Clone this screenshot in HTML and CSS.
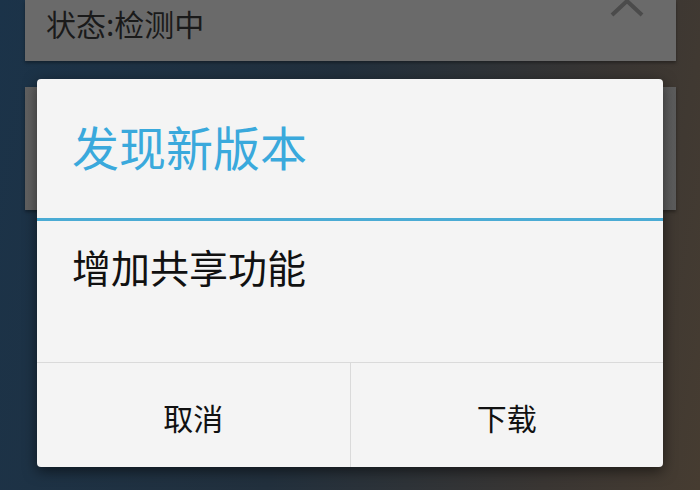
FILE: index.html
```html
<!DOCTYPE html>
<html lang="zh-CN">

<head>
    <meta charset="UTF-8">
    <meta name="viewport" content="width=device-width, initial-scale=1.0">
    <title>发现新版本</title>
    <link rel="stylesheet" href="styles.css">
</head>

<body>
    <div class="screen">
        <div class="card status-card">
            <span class="status">状态:检测中</span>
            <svg class="chevron" width="40" height="20" viewBox="0 0 40 20">
                <polyline points="5,15 20,1 35,15" fill="none" stroke="#4b4b4b" stroke-width="4" />
            </svg>
        </div>
        <div class="card info-card"></div>
    </div>

    <div class="dialog">
        <div class="dialog-title">发现新版本</div>
        <div class="dialog-body">增加共享功能</div>
        <div class="dialog-buttons">
            <button class="btn">取消</button>
            <button class="btn">下载</button>
        </div>
    </div>
</body>

</html>
```

FILE: styles.css
```css
html,
body {
    margin: 0;
    padding: 0;
    width: 700px;
    height: 490px;
    overflow: hidden;
}

body {
    font-family: "Noto Sans CJK SC", "Noto Sans", sans-serif;
    background: linear-gradient(100deg, #1b3349 0%, #22303d 45%, #3a3633 80%, #463c31 100%);
    position: relative;
}

.screen {
    padding: 0 24px 0 25px;
}

.card {
    background-color: #6a6a6a;
    box-shadow: 0 2px 3px rgba(0, 0, 0, 0.35);
}

.status-card {
    height: 61px;
    position: relative;
    display: flex;
    align-items: flex-start;
}

.status {
    font-size: 30px;
    line-height: 1;
    color: #1a1a1a;
    margin: 8px 0 0 21px;
}

.chevron {
    position: absolute;
    top: 0;
    left: 582px;
}

.info-card {
    margin-top: 26px;
    height: 123px;
    background: linear-gradient(90deg, #606060, #6c6c6c 10%, #6c6c6c 90%, #5c5c5c);
}

.dialog {
    position: absolute;
    left: 37px;
    top: 79px;
    width: 626px;
    height: 388px;
    background-color: #f4f4f4;
    border-radius: 4px;
    box-shadow: 0 4px 14px rgba(0, 0, 0, 0.55);
    display: flex;
    flex-direction: column;
    overflow: hidden;
}

.dialog-title {
    height: 142px;
    box-sizing: border-box;
    padding: 0 0 6px 35px;
    display: flex;
    align-items: center;
    font-size: 47px;
    color: #3aa9dc;
    border-bottom: 3px solid #4aabd4;
}

.dialog-body {
    height: 142px;
    box-sizing: border-box;
    padding: 22px 0 0 35px;
    font-size: 39px;
    line-height: 1.2;
    color: #111;
    border-bottom: 1px solid #dadada;
}

.dialog-buttons {
    flex: 1;
    display: flex;
}

.btn {
    flex: 1;
    border: none;
    background: transparent;
    font-family: inherit;
    font-size: 30px;
    color: #111;
    padding: 4px 0 0;
}

.btn + .btn {
    border-left: 1px solid #dadada;
}
```
